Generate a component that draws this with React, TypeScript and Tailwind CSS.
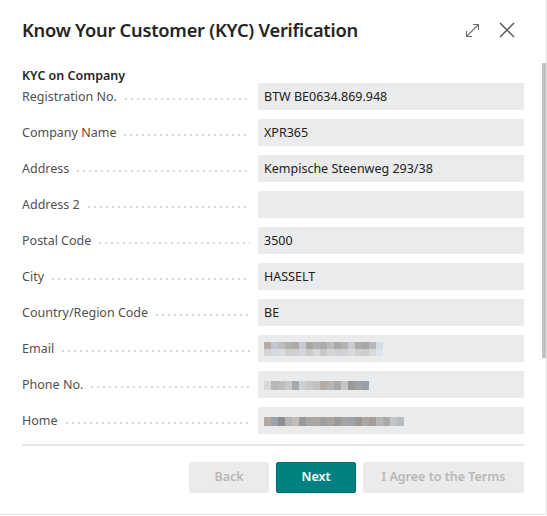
import React from "react";

const rows: { label: string; value?: string; blur?: "email" | "phone" | "home" }[] = [
  { label: "Registration No.", value: "BTW BE0634.869.948" },
  { label: "Company Name", value: "XPR365" },
  { label: "Address", value: "Kempische Steenweg 293/38" },
  { label: "Address 2", value: "" },
  { label: "Postal Code", value: "3500" },
  { label: "City", value: "HASSELT" },
  { label: "Country/Region Code", value: "BE" },
  { label: "Email", blur: "email" },
  { label: "Phone No.", blur: "phone" },
  { label: "Home", blur: "home" },
];

const blurData: Record<string, string[][]> = {
  email: [
    ["#b5aca4", "#c3c7cf", "#bdbdbd", "#b4b2b0", "#aeaaa6", "#c6cad0", "#a9a7a6", "#b2b1b0", "#aaaaaa", "#bdbdbd", "#a9a9aa", "#b3b3b3", "#c8cbd0", "#aeaeae", "#a8a6a4", "#b9b9b9", "#d6dde6"],
    ["#d3d3d3", "#d6dbe2", "#dcdcdc", "#cfcfcf", "#d0d0d0", "#d4d6da", "#cbcbcb", "#d8d8d8", "#c9c9c9", "#d5d5d5", "#cfd1d4", "#d2d2d2", "#d8dadd", "#d0d0d0", "#cdcdcd", "#d9d9d9", "#dfe4ea"],
  ],
  phone: [
    ["#d8d8d8", "#b8b8b8", "#bdbdbd", "#c9c9c9", "#a9a9a9", "#cdd0d4", "#c8c8c8", "#c2c2c2", "#b2aca6", "#b6b6b6", "#a9a9a9", "#c6c6c6", "#999999", "#a3a3a3", "#9aa0aa"],
  ],
  home: [
    ["#b4a8a3", "#9aa3ad", "#8f8f8f", "#b5b5b5", "#c2bdb8", "#999999", "#a6a6a6", "#a9a6a4", "#9f9f9f", "#aaa4a0", "#9a9a9a", "#a5a5a5", "#a0a3a8", "#9b9797", "#aaa7a5", "#a49d9b", "#b6b6b6", "#aaaaaa", "#c1c6cb", "#b8bcc0"],
  ],
};

function Blur({ kind }: { kind: "email" | "phone" | "home" }) {
  const data = blurData[kind];
  return (
    <div className="flex flex-col">
      {data.map((r, i) => (
        <div key={i} className="flex">
          {r.map((c, j) => (
            <div key={j} className={kind === "email" ? "w-[7px] h-[7px]" : "w-[7px] h-[9px]"} style={{ background: c }} />
          ))}
        </div>
      ))}
    </div>
  );
}

export default function App() {
  return (
    <div className="w-[547px] h-[516px] bg-white font-['Noto_Sans',sans-serif] text-[#212121]">
      <div className="w-[547px] h-[515px] border-r border-b border-[#e3e3e3] flex flex-col">
        <div className="h-[63px] flex items-start pl-[22px] pr-[31px] pt-[16px]">
          <h1 className="text-[18.3px] leading-[28px] font-semibold tracking-[-0.25px] text-[#242424]">
            Know Your Customer (KYC) Verification
          </h1>
          <div className="ml-auto flex items-center gap-[19px] pt-[6px]">
            <svg width="15" height="15" viewBox="0 0 15 15" fill="none" stroke="#6b6b6b" strokeWidth="1.1">
              <path d="M1.5 13.5 L13.5 1.5" />
              <path d="M8 1.5 H13.5 V7" />
              <path d="M1.5 8 V13.5 H7" />
            </svg>
            <svg width="16" height="16" viewBox="0 0 16 16" fill="none" stroke="#5a5a5a" strokeWidth="1.5">
              <path d="M1 1 L15 15 M15 1 L1 15" />
            </svg>
          </div>
        </div>
        <div className="flex-1 flex">
          <div className="flex-1 flex flex-col pl-[22px] pr-[18px]">
            <div className="pt-[5px] h-[20px] text-[12.5px] leading-[16px] font-semibold text-[#262626]">KYC on Company</div>
            <div className="flex flex-col gap-[9px]">
              {rows.map((r) => (
                <div key={r.label} className="flex h-[27px] items-center">
                  <div className="w-[236px] flex items-center pr-[8px] pt-[2px]">
                    <span className="text-[12.5px] text-[#505050] whitespace-nowrap">{r.label}</span>
                    <div className="flex-1 ml-[8px] mt-[3px] h-[2px] bg-[linear-gradient(to_right,#d6d6d6_2px,transparent_2px)] bg-[length:6px_2px]" />
                  </div>
                  <div className="flex-1 h-[27px] bg-[#eaebec] flex items-center pl-[6px] pt-[1px] text-[12.5px] text-[#212121]">
                    {r.blur ? <Blur kind={r.blur} /> : r.value}
                  </div>
                </div>
              ))}
            </div>
            <div className="mt-[10px] h-[2px] bg-[#e6e6e6]" />
            <div className="flex justify-end gap-[7px] pt-[16px]">
              <button className="w-[80px] h-[31px] rounded-[2px] bg-[#ebebeb] text-[#b8b8b8] text-[12.5px] font-semibold">Back</button>
              <button className="w-[80px] h-[31px] rounded-[2px] bg-[#008080] border border-[#006e6e] text-white text-[12.5px] font-semibold">Next</button>
              <button className="w-[161px] h-[31px] rounded-[2px] bg-[#ebebeb] text-[#b8b8b8] text-[12.5px] font-semibold">I Agree to the Terms</button>
            </div>
          </div>
          <div className="w-[4px]">
            <div className="h-[295px] bg-[#c2c2c2]" />
          </div>
        </div>
      </div>
    </div>
  );
}
